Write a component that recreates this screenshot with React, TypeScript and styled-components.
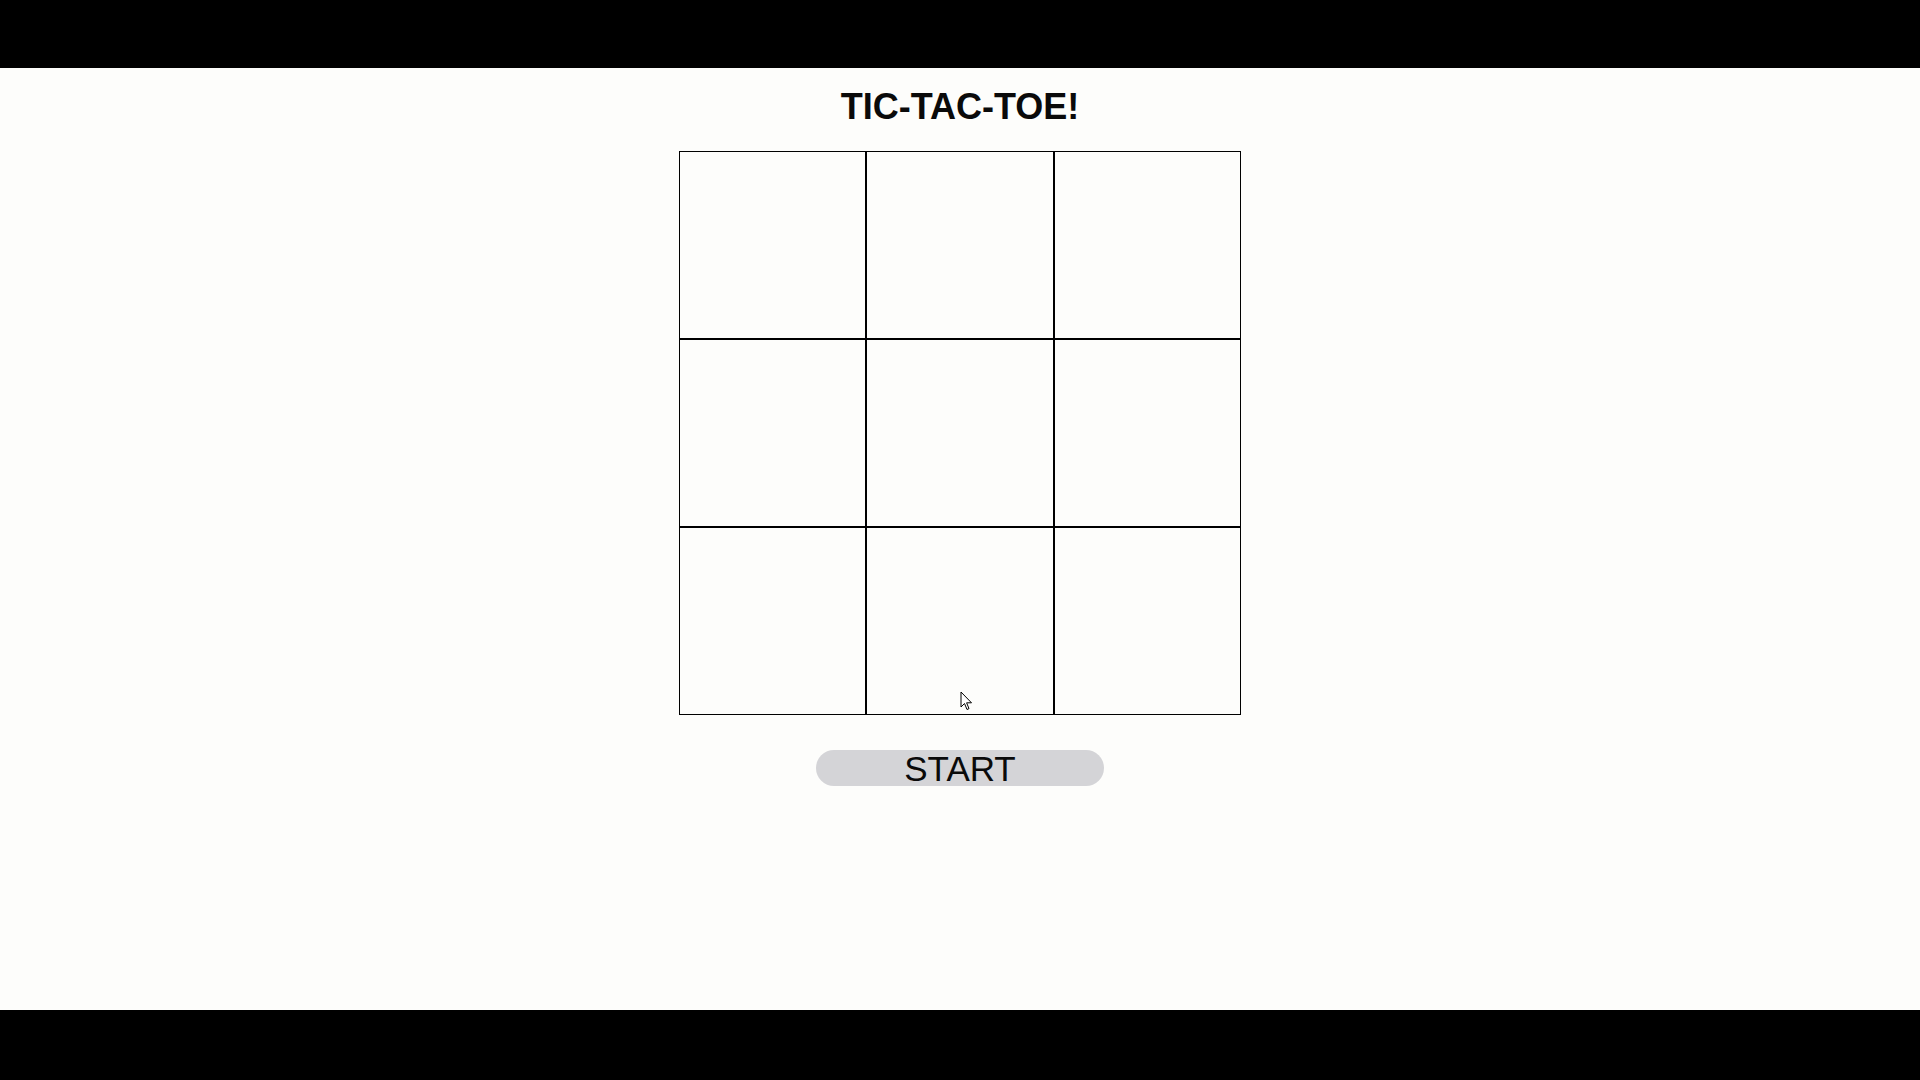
import React from 'react';
import styled, { createGlobalStyle } from 'styled-components';

const GlobalStyle = createGlobalStyle`
  html, body {
    margin: 0;
    padding: 0;
    background: #000;
  }
  body {
    font-family: 'Liberation Sans', Arial, sans-serif;
  }
`;

const Screen = styled.div`
  width: 1920px;
  height: 1080px;
  display: flex;
  flex-direction: column;
  background: #000;
`;

const Bar = styled.div<{ h: number }>`
  height: ${(props) => props.h}px;
  flex-shrink: 0;
  background: #000;
`;

const Page = styled.main`
  position: relative;
  flex: 1;
  display: flex;
  flex-direction: column;
  align-items: center;
  padding-top: 18px;
  background: #fdfdfb;
`;

const Title = styled.h1`
  margin: 0 0 24px;
  font-size: 36px;
  line-height: 41px;
  font-weight: 700;
  color: #0a0a0a;
`;

const Board = styled.div`
  display: grid;
  grid-template-columns: 187px 188px 187px;
  grid-template-rows: repeat(3, 188px);
`;

const Cell = styled.button`
  box-sizing: border-box;
  width: 100%;
  height: 100%;
  margin: 0;
  padding: 0;
  border: 1px solid #000;
  background: transparent;
  cursor: pointer;
`;

const StartButton = styled.button`
  margin-top: 35px;
  width: 288px;
  height: 36px;
  padding: 0;
  border: none;
  border-radius: 18px;
  background: #d4d4d7;
  color: #0a0a0a;
  font-family: 'Liberation Sans', Arial, sans-serif;
  font-size: 35px;
  line-height: 38px;
  cursor: pointer;
`;

const Pointer = styled.svg`
  position: absolute;
  left: 960px;
  top: 623px;
  pointer-events: none;
`;

const cells = Array.from({ length: 9 }, (_, i) => i);

const App: React.FC = () => {
  return (
    <>
      <GlobalStyle />
      <Screen>
        <Bar h={68} />
        <Page>
          <Title>TIC-TAC-TOE!</Title>
          <Board>
            {cells.map((i) => (
              <Cell key={`cell-${i}`} aria-label={`cell ${i + 1}`} />
            ))}
          </Board>
          <StartButton>START</StartButton>
          {/* mouse pointer caught in the capture */}
          <Pointer width="14" height="21" viewBox="0 0 14 21">
            <path
              d="M1 1 L1 16 L4.5 12.5 L7 18.5 L9 17.6 L6.6 11.8 L11.5 11.8 Z"
              fill="#fff"
              stroke="#000"
              strokeWidth="1"
              strokeLinejoin="miter"
            />
          </Pointer>
        </Page>
        <Bar h={70} />
      </Screen>
    </>
  );
};

export default App;
